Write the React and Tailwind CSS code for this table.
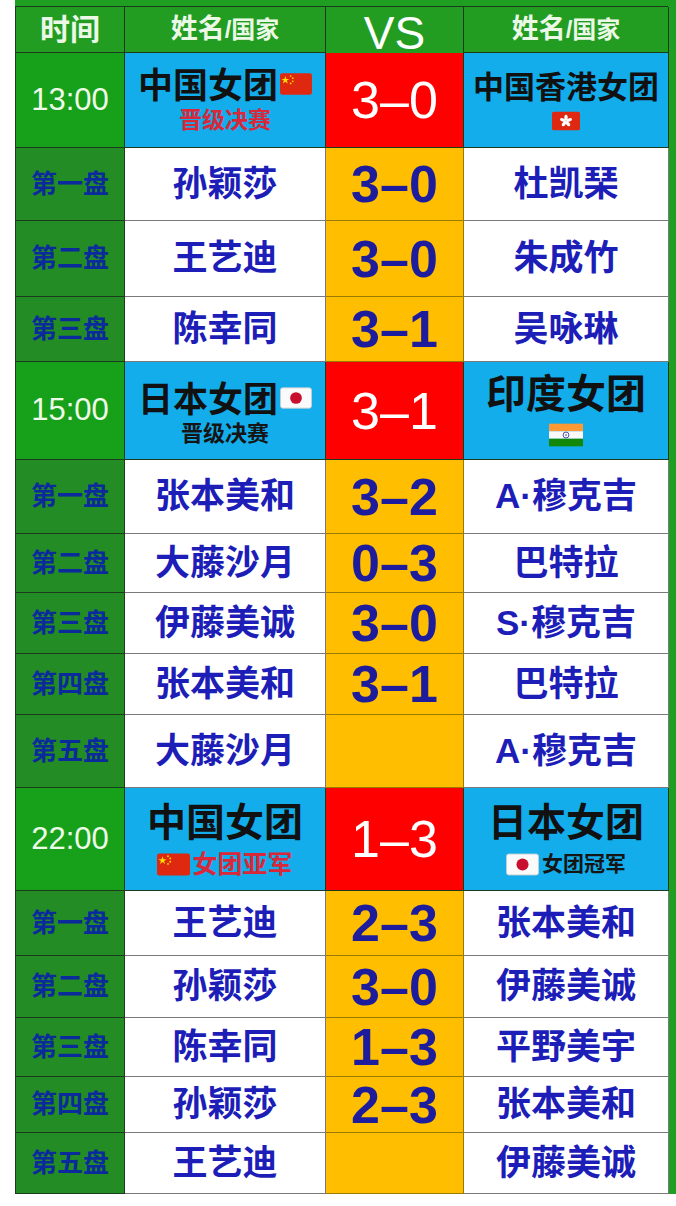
import React from "react";

const FONT = { fontFamily: '"Liberation Sans", "Noto Sans CJK SC", sans-serif' };

function FlagCN({ className = "" }) {
  return (
    <svg viewBox="0 0 30 20" className={className}>
      <rect x="0" y="0" width="30" height="20" rx="2" fill="#de2910" />
      <polygon points="5,2.5 5.9,5.2 8.7,5.2 6.4,6.8 7.3,9.5 5,7.8 2.7,9.5 3.6,6.8 1.3,5.2 4.1,5.2" fill="#ffde00" />
      <circle cx="10" cy="2.5" r="0.8" fill="#ffde00" />
      <circle cx="12" cy="4.5" r="0.8" fill="#ffde00" />
      <circle cx="12" cy="7.5" r="0.8" fill="#ffde00" />
      <circle cx="10" cy="9.5" r="0.8" fill="#ffde00" />
    </svg>
  );
}

function FlagHK({ className = "" }) {
  return (
    <svg viewBox="0 0 30 20" className={className}>
      <rect x="0" y="0" width="30" height="20" rx="2" fill="#de2910" />
      <g transform="translate(15 10)" fill="#fff">
        <ellipse cx="0" cy="-3.5" rx="1.8" ry="3.2" />
        <ellipse cx="0" cy="-3.5" rx="1.8" ry="3.2" transform="rotate(72)" />
        <ellipse cx="0" cy="-3.5" rx="1.8" ry="3.2" transform="rotate(144)" />
        <ellipse cx="0" cy="-3.5" rx="1.8" ry="3.2" transform="rotate(216)" />
        <ellipse cx="0" cy="-3.5" rx="1.8" ry="3.2" transform="rotate(288)" />
      </g>
    </svg>
  );
}

function FlagJP({ className = "" }) {
  return (
    <svg viewBox="0 0 30 20" className={className}>
      <rect x="0.5" y="0.5" width="29" height="19" rx="2" fill="#fafafa" stroke="#cfcfcf" strokeWidth="0.8" />
      <circle cx="15" cy="10" r="5.5" fill="#c8102e" />
    </svg>
  );
}

function FlagIN({ className = "" }) {
  return (
    <svg viewBox="0 0 30 20" className={className}>
      <rect x="0" y="0" width="30" height="6.7" fill="#ff9933" />
      <rect x="0" y="6.7" width="30" height="6.6" fill="#fafafa" />
      <rect x="0" y="13.3" width="30" height="6.7" fill="#138808" />
      <circle cx="15" cy="10" r="2.6" fill="none" stroke="#000080" strokeWidth="0.6" />
      <circle cx="15" cy="10" r="0.6" fill="#000080" />
    </svg>
  );
}

const sections = [
  {
    time: "13:00",
    h: "h-[95px]",
    score: "3–0",
    left: (
      <div className="flex flex-col items-center">
        <div className="flex items-center gap-[2px] text-[35px] font-bold leading-[40px] text-[#111]">
          中国女团<FlagCN className="w-[32px] h-[22px] -mt-[4px]" />
        </div>
        <div className="text-[23px] leading-[28px] font-bold text-[#d8283a]">晋级决赛</div>
      </div>
    ),
    right: (
      <div className="flex flex-col items-center">
        <div className="text-[31px] font-bold leading-[38px] text-[#111]">中国香港女团</div>
        <FlagHK className="w-[28px] h-[20px] mt-[4px]" />
      </div>
    ),
    games: [
      ["第一盘", "孙颖莎", "3–0", "杜凯琹", "h-[73px]"],
      ["第二盘", "王艺迪", "3–0", "朱成竹", "h-[76px]"],
      ["第三盘", "陈幸同", "3–1", "吴咏琳", "h-[65px]"],
    ],
  },
  {
    time: "15:00",
    h: "h-[98px]",
    score: "3–1",
    left: (
      <div className="flex flex-col items-center mt-[6px]">
        <div className="flex items-center gap-[2px] text-[35px] font-bold leading-[40px] text-[#111]">
          日本女团<FlagJP className="w-[32px] h-[22px] -mt-[4px]" />
        </div>
        <div className="text-[22px] leading-[28px] font-bold text-[#151515]">晋级决赛</div>
      </div>
    ),
    right: (
      <div className="flex flex-col items-center -mt-[4px]">
        <div className="text-[40px] font-bold leading-[46px] text-[#111]">印度女团</div>
        <FlagIN className="w-[34px] h-[24px] mt-[6px]" />
      </div>
    ),
    games: [
      ["第一盘", "张本美和", "3–2", "A·穆克吉", "h-[74px]"],
      ["第二盘", "大藤沙月", "0–3", "巴特拉", "h-[59px]"],
      ["第三盘", "伊藤美诚", "3–0", "S·穆克吉", "h-[61px]"],
      ["第四盘", "张本美和", "3–1", "巴特拉", "h-[61px]"],
      ["第五盘", "大藤沙月", "", "A·穆克吉", "h-[73px]"],
    ],
  },
  {
    time: "22:00",
    h: "h-[103px]",
    score: "1–3",
    left: (
      <div className="flex flex-col items-center">
        <div className="text-[39px] font-bold leading-[46px] text-[#111]">中国女团</div>
        <div className="flex items-center gap-[2px] mt-[4px]">
          <FlagCN className="w-[33px] h-[23px]" />
          <span className="text-[25px] leading-[28px] font-bold text-[#d8283a]">女团亚军</span>
        </div>
      </div>
    ),
    right: (
      <div className="flex flex-col items-center">
        <div className="text-[39px] font-bold leading-[46px] text-[#111]">日本女团</div>
        <div className="flex items-center gap-[3px] mt-[4px]">
          <FlagJP className="w-[33px] h-[23px]" />
          <span className="text-[21px] leading-[28px] font-bold text-[#151515]">女团冠军</span>
        </div>
      </div>
    ),
    games: [
      ["第一盘", "王艺迪", "2–3", "张本美和", "h-[65px]"],
      ["第二盘", "孙颖莎", "3–0", "伊藤美诚", "h-[62px]"],
      ["第三盘", "陈幸同", "1–3", "平野美宇", "h-[59px]"],
      ["第四盘", "孙颖莎", "2–3", "张本美和", "h-[56px]"],
      ["第五盘", "王艺迪", "", "伊藤美诚", "h-[61px]"],
    ],
  },
];

function GameRow({ g }) {
  const [label, a, score, b, h] = g;
  return (
    <div className={`flex ${h}`}>
      <div className="w-[109px] shrink-0 bg-[#238c24] border-r border-b border-[#1c3a1c] flex items-center justify-center text-[26px] font-bold text-[#0b2a9c]">
        {label}
      </div>
      <div className="w-[201px] shrink-0 bg-white border-r border-b border-[#7a7a7a] flex items-center justify-center text-[35px] font-bold text-[#1d1db8]">
        {a}
      </div>
      <div className="w-[138px] shrink-0 bg-[#ffbf00] border-r border-b border-[#9a7a00] flex items-center justify-center text-[52px] font-bold text-[#1c1c9c] leading-none">
        {score}
      </div>
      <div className="w-[205px] shrink-0 bg-white border-r border-b border-[#7a7a7a] flex items-center justify-center text-[35px] font-bold text-[#1d1db8]">
        {b}
      </div>
    </div>
  );
}

export default function App() {
  return (
    <div className="w-[676px] h-[1206px] bg-white" style={FONT}>
      <div className="ml-[15px] w-[661px] bg-[#1f9f22] pt-[6px] pr-[8px]">
        <div className="border-t border-l border-[#1c3a1c]">
          {/* header */}
          <div className="flex h-[46px] bg-[#229d22]">
            <div className="w-[109px] shrink-0 border-r border-b border-[#1c3a1c] flex items-center justify-center text-[30px] font-bold text-[#ecf8e6]">
              时间
            </div>
            <div className="w-[201px] shrink-0 border-r border-b border-[#1c3a1c] flex items-center justify-center font-bold text-[#ecf8e6]">
              <span className="text-[27px]">姓名</span>
              <span className="text-[24px]">/国家</span>
            </div>
            <div className="w-[138px] shrink-0 border-r border-[#1c3a1c] flex items-end justify-center overflow-hidden">
              <span className="text-[46px] leading-none text-white translate-y-[3px]" style={{ fontFamily: '"Liberation Sans", sans-serif' }}>VS</span>
            </div>
            <div className="w-[205px] shrink-0 border-r border-b border-[#1c3a1c] flex items-center justify-center font-bold text-[#ecf8e6]">
              <span className="text-[27px]">姓名</span>
              <span className="text-[24px]">/国家</span>
            </div>
          </div>
          {sections.map((s) => (
            <React.Fragment key={s.time}>
              <div className={`flex ${s.h}`}>
                <div className="w-[109px] shrink-0 bg-[#17a01a] border-r border-b border-[#1c3a1c] flex items-center justify-center text-[31px] text-[#eefbe8]">
                  {s.time}
                </div>
                <div className="w-[201px] shrink-0 bg-[#13adec] border-r border-b border-[#1c3a1c] flex items-center justify-center">
                  {s.left}
                </div>
                <div className="w-[138px] shrink-0 bg-[#fe0000] border-r border-b border-[#1c3a1c] flex items-center justify-center text-[52px] leading-none text-white">
                  {s.score}
                </div>
                <div className="w-[205px] shrink-0 bg-[#13adec] border-r border-b border-[#1c3a1c] flex items-center justify-center">
                  {s.right}
                </div>
              </div>
              {s.games.map((g, i) => (
                <GameRow key={i} g={g} />
              ))}
            </React.Fragment>
          ))}
        </div>
      </div>
    </div>
  );
}
